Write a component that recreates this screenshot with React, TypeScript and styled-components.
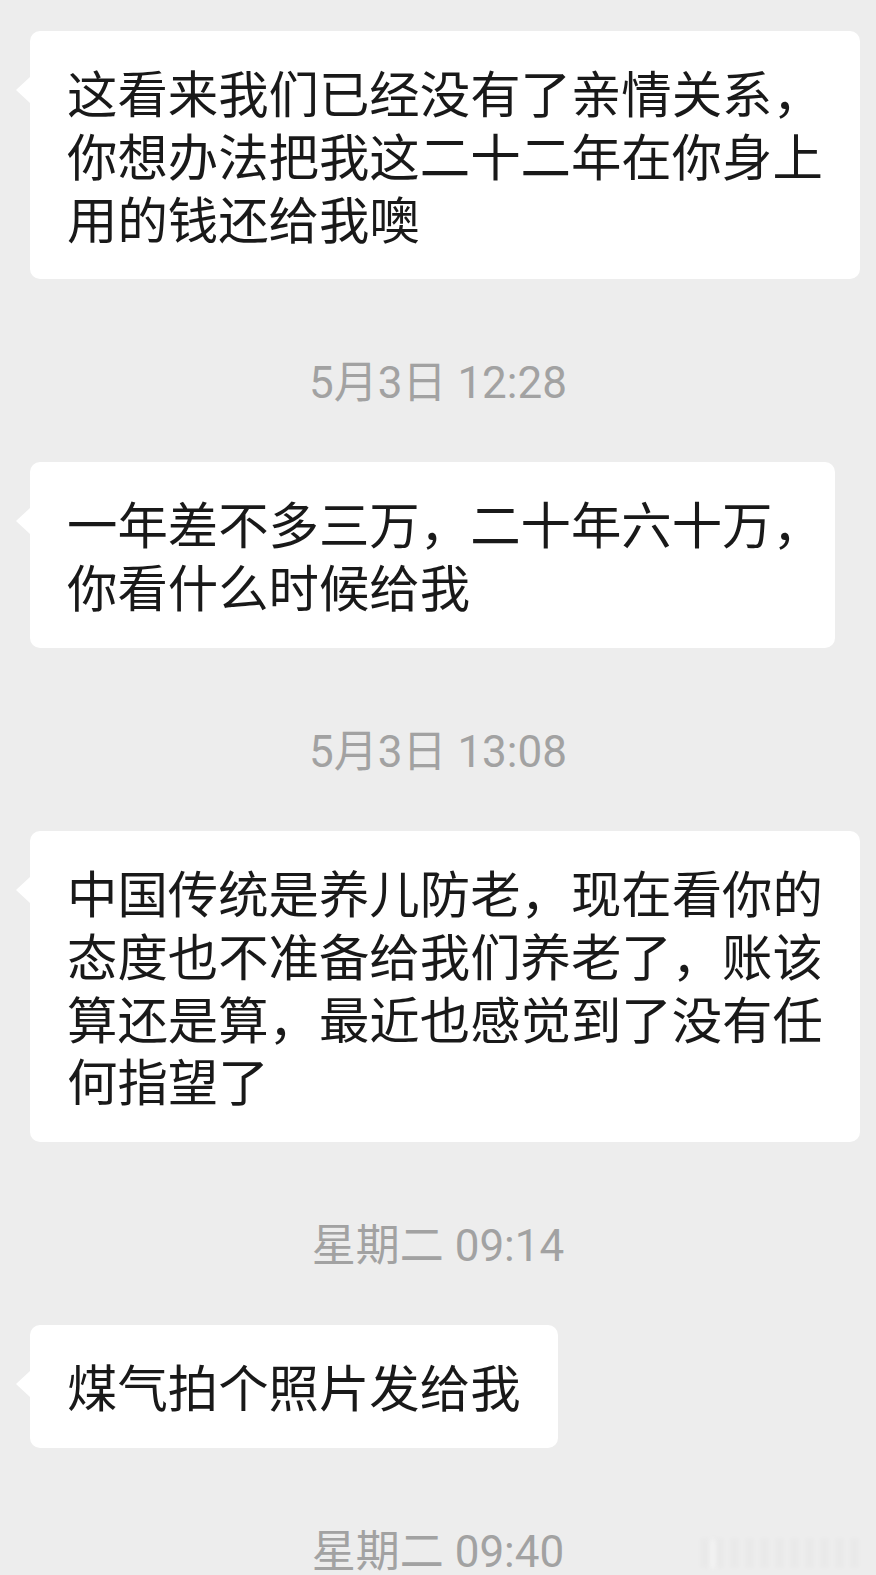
import React from "react";
import styled, { createGlobalStyle } from "styled-components";

const GlobalStyle = createGlobalStyle`
    html,
    body {
        margin: 0;
        padding: 0;
        background: #ededed;
    }
`;

const Page = styled.div`
    position: relative;
    width: 876px;
    height: 1575px;
    overflow: hidden;
    background: #ededed;
    box-sizing: border-box;
    padding: 31px 0 0 30px;
    display: flex;
    flex-direction: column;
    align-items: flex-start;
`;

const Bubble = styled.div`
    position: relative;
    background: #ffffff;
    border-radius: 10px;
    padding: 30px 37px;
    font-family: "Noto Sans CJK SC", "Noto Sans", sans-serif;
    font-size: 50.4px;
    line-height: 62.8px;
    color: #191919;
    white-space: nowrap;

    &::before {
        content: "";
        position: absolute;
        left: -14px;
        top: 46px;
        border-style: solid;
        border-width: 13px 14px 13px 0;
        border-color: transparent #ffffff transparent transparent;
    }
`;

const Line = styled.span`
    display: block;
`;

// iOS halves the width of a full-width comma sitting at the end of a line
const TrailingPunct = styled.span`
    font-feature-settings: "halt";
`;

const Timestamp = styled.div`
    align-self: stretch;
    margin: 82px 30px 57px 0;
    text-align: center;
    font-family: Roboto, "Noto Sans CJK SC", sans-serif;
    font-size: 44px;
    line-height: 44px;
    color: #a2a2a2;
`;

const Watermark = styled.div`
    position: absolute;
    right: 10px;
    bottom: 7px;
    width: 166px;
    height: 30px;
    opacity: 0.35;
    filter: blur(2px);
    background: repeating-linear-gradient(
        90deg,
        rgba(0, 0, 0, 0.05) 0 9px,
        rgba(0, 0, 0, 0) 9px 15px
    );

    &::before {
        content: "";
        position: absolute;
        left: 10px;
        top: 2px;
        width: 6px;
        height: 28px;
        background: rgba(255, 255, 255, 0.9);
    }
`;

type Item =
    | { kind: "msg"; lines: string[] }
    | { kind: "time"; text: string };

const items: Item[] = [
    {
        kind: "msg",
        lines: [
            "这看来我们已经没有了亲情关系，",
            "你想办法把我这二十二年在你身上",
            "用的钱还给我噢",
        ],
    },
    { kind: "time", text: "5月3日 12:28" },
    {
        kind: "msg",
        lines: ["一年差不多三万，二十年六十万，", "你看什么时候给我"],
    },
    { kind: "time", text: "5月3日 13:08" },
    {
        kind: "msg",
        lines: [
            "中国传统是养儿防老，现在看你的",
            "态度也不准备给我们养老了，账该",
            "算还是算，最近也感觉到了没有任",
            "何指望了",
        ],
    },
    { kind: "time", text: "星期二 09:14" },
    { kind: "msg", lines: ["煤气拍个照片发给我"] },
    { kind: "time", text: "星期二 09:40" },
];

const renderLine = (text: string) => {
    const last = text.slice(-1);
    if (last === "，") {
        return (
            <>
                {text.slice(0, -1)}
                <TrailingPunct>{last}</TrailingPunct>
            </>
        );
    }
    return text;
};

const App: React.FC = () => {
    return (
        <>
            <GlobalStyle />
            <Page>
                {items.map((item, i) =>
                    item.kind === "msg" ? (
                        <Bubble key={i}>
                            {item.lines.map((line, j) => (
                                <Line key={j}>{renderLine(line)}</Line>
                            ))}
                        </Bubble>
                    ) : (
                        <Timestamp key={i}>{item.text}</Timestamp>
                    )
                )}
                <Watermark />
            </Page>
        </>
    );
};

export default App;
